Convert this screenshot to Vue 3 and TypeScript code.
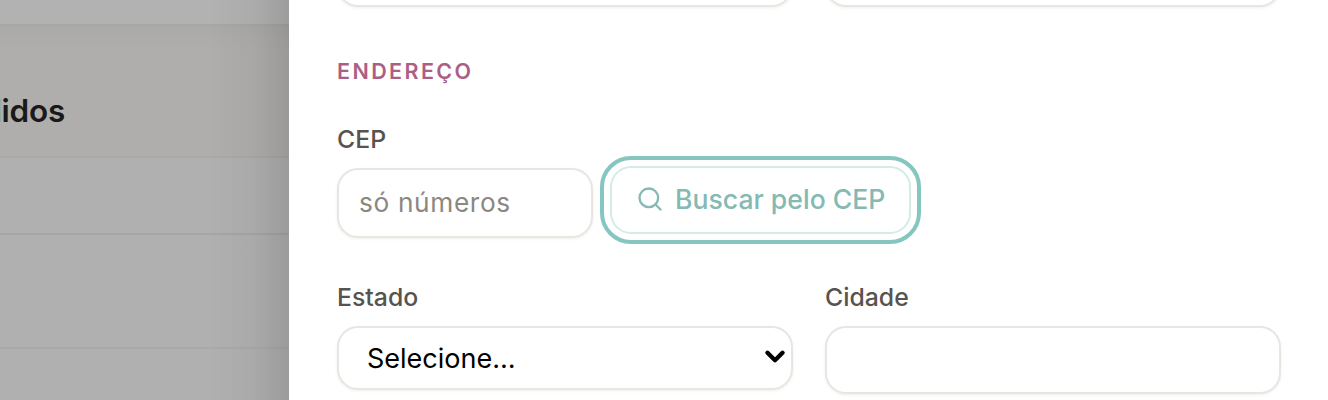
<script setup lang="ts">
const rows: number[] = [1, 2, 3]
</script>

<template>
  <div class="page">
    <aside class="behind">
      <div class="strip"></div>
      <div class="head">
        <div class="title-clip"><span class="title">Pedidos</span></div>
      </div>
      <div v-for="r in rows" :key="r" class="row" :class="`row-${r}`"></div>
      <div class="shade"></div>
    </aside>
    <main class="panel">
      <div class="grid top-row">
        <input class="field" type="text" aria-label="Nome" />
        <input class="field" type="text" aria-label="Telefone" />
      </div>
      <h2 class="section">ENDEREÇO</h2>
      <label class="label cep-label" for="cep">CEP</label>
      <div class="cep-row">
        <input id="cep" class="field cep" type="text" placeholder="só números" />
        <button class="search" type="button">
          <svg class="search-icon" viewBox="0 0 24 24" fill="none" stroke="currentColor" stroke-width="2" stroke-linecap="round" stroke-linejoin="round">
            <circle cx="11" cy="11" r="8" />
            <path d="m21 21-4.3-4.3" />
          </svg>
          <span>Buscar pelo CEP</span>
        </button>
      </div>
      <div class="grid state-row">
        <div class="col">
          <label class="label" for="estado">Estado</label>
          <div class="select-wrap">
            <select id="estado" class="select">
              <option>Selecione…</option>
            </select>
            <svg class="chevron" viewBox="0 0 16 12" fill="none" stroke="currentColor" stroke-width="3.4" stroke-linecap="round" stroke-linejoin="round">
              <path d="M2 3l6 6 6-6" />
            </svg>
          </div>
        </div>
        <div class="col">
          <label class="label" for="cidade">Cidade</label>
          <input id="cidade" class="field city" type="text" />
        </div>
      </div>
    </main>
  </div>
</template>

<style>
html, body { margin: 0; padding: 0; background: #fff; }
</style>

<style scoped>
.page {
  display: flex;
  width: 1328px;
  height: 400px;
  overflow: hidden;
  font-family: Inter, "Liberation Sans", sans-serif;
  background: #fff;
}
.behind {
  position: relative;
  width: 289px;
  flex: none;
  overflow: hidden;
  background: #b0b0b0;
}
.strip { height: 24px; background: #b2b2b2; border-bottom: 2px solid #a7a7a5; }
.head {
  height: 130px;
  display: flex;
  align-items: center;
  background: linear-gradient(to bottom, #abaaa8, #afaeac 20%, #afaeac);
  border-bottom: 2px solid #aaa9a7;
}
.title-clip {
  width: 65px;
  display: flex;
  justify-content: flex-end;
  overflow: hidden;
  margin-top: 38px;
}
.title { font-size: 31.5px; font-weight: 600; color: #191919; letter-spacing: -0.25px; white-space: nowrap; }
.row { border-bottom: 2px solid #a7a6a2; }
.row-1 { height: 75px; }
.row-2 { height: 112px; border-bottom-color: #aaaaa8; }
.row-3 { height: 60px; border-bottom: 0; }
.shade {
  position: absolute;
  inset: 0;
  background: linear-gradient(to right, rgba(0,0,0,0) 72%, rgba(0,0,0,0.04) 88%, rgba(0,0,0,0.12) 100%);
}
.panel {
  flex: 1;
  min-width: 0;
  padding: 0 47px 0 48px;
}
.grid {
  display: grid;
  grid-template-columns: 456px 456px;
  column-gap: 32px;
}
.field {
  display: block;
  box-sizing: border-box;
  width: 100%;
  height: 68px;
  padding: 0 20px 2px;
  border: 2px solid #e9e5e1;
  border-radius: 21px;
  background: #fff;
  box-shadow: 0 1px 3px rgba(60, 50, 40, 0.08);
  font: 400 26.25px Inter, "Liberation Sans", sans-serif;
  letter-spacing: 0.65px;
  color: #111;
  outline: none;
}
.field::placeholder { color: #8b8781; opacity: 1; }
.top-row { margin-top: -61px; }
.section {
  margin: 52px 0 0;
  font-size: 21.5px;
  line-height: 25px;
  font-weight: 600;
  letter-spacing: 2.4px;
  color: #ab5f85;
}
.label {
  display: block;
  font-size: 24.8px;
  line-height: 28px;
  font-weight: 500;
  color: #57534e;
}
.cep-label { margin-top: 41px; }
.cep-row {
  display: flex;
  align-items: flex-start;
  gap: 16.5px;
  margin-top: 13px;
}
.cep { width: 256px; height: 70px; margin-top: 2px; }
.search {
  display: flex;
  align-items: center;
  gap: 11.5px;
  box-sizing: border-box;
  width: 301.5px;
  height: 68px;
  padding: 0 24px 2px;
  border: 2px solid #d5ebe8;
  border-radius: 21px;
  background: #fff;
  outline: 4px solid #86c6c1;
  outline-offset: 6px;
  color: #85b9b3;
  font: 500 26.6px Inter, "Liberation Sans", sans-serif;
  white-space: nowrap;
}
.search-icon { width: 28px; height: 28px; flex: none; }
.state-row { margin-top: 45px; }
.col { min-width: 0; }
.col .label { margin-bottom: 15px; }
.select-wrap { position: relative; }
.select {
  display: block;
  box-sizing: border-box;
  width: 100%;
  height: 64px;
  padding: 0 28px;
  border: 2px solid #e9e5e1;
  border-radius: 21px;
  background: #fff;
  box-shadow: 0 1px 3px rgba(60, 50, 40, 0.08);
  appearance: none;
  font: 400 27px Inter, "Liberation Sans", sans-serif;
  color: #000;
}
.chevron {
  position: absolute;
  right: 8px;
  top: 23px;
  width: 20px;
  height: 15px;
  color: #000;
  pointer-events: none;
}
</style>
